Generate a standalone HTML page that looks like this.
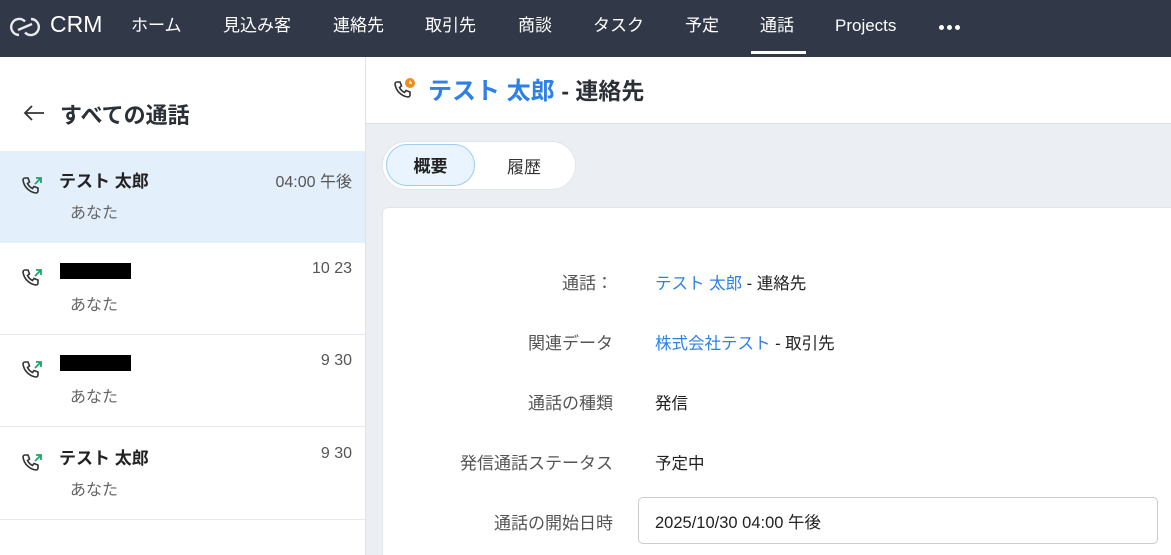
<!DOCTYPE html>
<html><head><meta charset="utf-8"><style>
*{margin:0;padding:0;box-sizing:border-box}
html,body{width:1171px;height:555px;overflow:hidden}
body{background:#fff;font-family:"Liberation Sans","Noto Sans CJK JP",sans-serif;position:relative;color:#222}
.nav{position:absolute;left:0;top:0;width:1171px;height:57px;background:#313847;color:#fff}
.nav span{position:absolute;top:15px;font-size:17px;line-height:22px}
.left{position:absolute;left:0;top:57px;width:366px;height:498px;border-right:1px solid #dde3ea;background:#fff}
.item{position:absolute;left:0;width:365px;height:92px;border-bottom:1px solid #e6e9ee}
.item .nm{position:absolute;left:59px;top:16px;font-size:17px;font-weight:bold;color:#222}
.item .you{position:absolute;left:70px;top:48px;font-size:16px;color:#666}
.item .tm{position:absolute;right:13px;top:17px;font-size:16px;color:#555}
.item svg{position:absolute;left:20px;top:24px}
.red{position:absolute;left:60px;top:20px;width:71px;height:16px;background:#000}
.right{position:absolute;left:366px;top:57px;width:805px;height:498px;background:#ebeef3;overflow:hidden}
.hdr{position:absolute;left:0;top:0;width:805px;height:67px;background:#fff;border-bottom:1px solid #d8dee7}
.lab{position:absolute;right:558px;font-size:17px;color:#555;text-align:right;white-space:nowrap}
.val{position:absolute;left:655px;font-size:16.5px;color:#222;white-space:nowrap}
.blue{color:#2f80e4}
</style></head><body>
<div class="nav">
<svg style="position:absolute;left:9px;top:15px" width="32" height="24" viewBox="0 0 32 24"><path d="M10 20a8 8 0 1 1 6-13.5" fill="none" stroke="#e8eaee" stroke-width="2.4"/><path d="M22 4a8 8 0 1 1-6 13.5" fill="none" stroke="#e8eaee" stroke-width="2.4"/><path d="M9 15l14-6" stroke="#e8eaee" stroke-width="2.4"/></svg>
<span style="left:50px;top:13px;font-size:23px">CRM</span>
<span style="left:131px">ホーム</span>
<span style="left:223px">見込み客</span>
<span style="left:333px">連絡先</span>
<span style="left:425px">取引先</span>
<span style="left:518px">商談</span>
<span style="left:593px">タスク</span>
<span style="left:685px">予定</span>
<span style="left:760px">通話</span>
<span style="left:835px">Projects</span>
<div style="position:absolute;left:939px;top:25px;width:5px;height:5px;border-radius:50%;background:#fff;box-shadow:8px 0 #fff,16px 0 #fff"></div>
<div style="position:absolute;left:751px;top:51px;width:55px;height:3px;background:#fff"></div>
</div>
<div class="left">
<svg style="position:absolute;left:23px;top:47px" width="22" height="18" viewBox="0 0 22 18"><path d="M21 9H2M9 2L2 9l7 7" fill="none" stroke="#333" stroke-width="1.8"/></svg>
<div style="position:absolute;left:60px;top:41px;font-size:22px;font-weight:bold;color:#2b2f36">すべての通話</div>
<div class="item" style="top:94px;background:#e3effb;border-bottom:none">
<svg width="24" height="24" viewBox="0 0 24 24"><path d="M5 3l3 0 1.5 4-2 1.5a11 11 0 0 0 5 5l1.5-2 4 1.5 0 3a2 2 0 0 1-2 2A15 15 0 0 1 3 5a2 2 0 0 1 2-2z" fill="none" stroke="#333" stroke-width="1.6"/><path d="M15 9l6-6M16 3h5v5" fill="none" stroke="#1ea36b" stroke-width="1.8"/></svg>
<div class="nm">テスト 太郎</div><div class="tm">04:00 午後</div><div class="you">あなた</div></div>
<div class="item" style="top:186px">
<svg width="24" height="24" viewBox="0 0 24 24"><path d="M5 3l3 0 1.5 4-2 1.5a11 11 0 0 0 5 5l1.5-2 4 1.5 0 3a2 2 0 0 1-2 2A15 15 0 0 1 3 5a2 2 0 0 1 2-2z" fill="none" stroke="#333" stroke-width="1.6"/><path d="M15 9l6-6M16 3h5v5" fill="none" stroke="#1ea36b" stroke-width="1.8"/></svg>
<div class="red"></div><div class="tm">10 23</div><div class="you">あなた</div></div>
<div class="item" style="top:278px">
<svg width="24" height="24" viewBox="0 0 24 24"><path d="M5 3l3 0 1.5 4-2 1.5a11 11 0 0 0 5 5l1.5-2 4 1.5 0 3a2 2 0 0 1-2 2A15 15 0 0 1 3 5a2 2 0 0 1 2-2z" fill="none" stroke="#333" stroke-width="1.6"/><path d="M15 9l6-6M16 3h5v5" fill="none" stroke="#1ea36b" stroke-width="1.8"/></svg>
<div class="red"></div><div class="tm">9 30</div><div class="you">あなた</div></div>
<div class="item" style="top:371px">
<svg width="24" height="24" viewBox="0 0 24 24"><path d="M5 3l3 0 1.5 4-2 1.5a11 11 0 0 0 5 5l1.5-2 4 1.5 0 3a2 2 0 0 1-2 2A15 15 0 0 1 3 5a2 2 0 0 1 2-2z" fill="none" stroke="#333" stroke-width="1.6"/><path d="M15 9l6-6M16 3h5v5" fill="none" stroke="#1ea36b" stroke-width="1.8"/></svg>
<div class="nm">テスト 太郎</div><div class="tm">9 30</div><div class="you">あなた</div></div>
</div>
<div class="right">
<div class="hdr">
<svg style="position:absolute;left:26px;top:20px" width="24" height="24" viewBox="0 0 24 24"><path d="M5 5l3 0 1.5 4-2 1.5a11 11 0 0 0 5 5l1.5-2 4 1.5 0 3a2 2 0 0 1-2 2A15 15 0 0 1 3 7a2 2 0 0 1 2-2z" fill="none" stroke="#333" stroke-width="1.6"/><circle cx="18" cy="6" r="5" fill="#f08c1a"/><path d="M18 3.5V6h2" fill="none" stroke="#fff" stroke-width="1.2"/></svg>
<div style="position:absolute;left:62px;top:14px;font-size:24px;font-weight:bold;color:#2f80e4">テスト 太郎 <span style="color:#2b2f36;font-size:23px">- 連絡先</span></div>
</div>
<div style="position:absolute;left:16px;top:84px;width:194px;height:49px;background:#fff;border-radius:25px;border:1px solid #e2e6ec"></div>
<div style="position:absolute;left:20px;top:87px;width:89px;height:42px;background:#eaf4fe;border:1px solid #9ccdf4;border-radius:21px;text-align:center;line-height:44px;font-size:17px;font-weight:bold">概要</div>
<div style="position:absolute;left:141px;top:96px;font-size:17px;color:#333">履歴</div>
<div style="position:absolute;left:16px;top:150px;width:789px;height:348px;background:#fff;border-top:1px solid #e2e6ec;border-left:1px solid #e2e6ec;border-radius:6px 0 0 0"></div>
</div>
<div class="lab" style="top:269px">通話：</div>
<div class="val" style="top:270px"><span class="blue">テスト 太郎</span> - 連絡先</div>
<div class="lab" style="top:329px">関連データ</div>
<div class="val" style="top:330px"><span class="blue">株式会社テスト</span> - 取引先</div>
<div class="lab" style="top:389px">通話の種類</div>
<div class="val" style="top:390px">発信</div>
<div class="lab" style="top:449px">発信通話ステータス</div>
<div class="val" style="top:450px">予定中</div>
<div class="lab" style="top:509px">通話の開始日時</div>
<div style="position:absolute;left:638px;top:497px;width:520px;height:47px;border:1px solid #c8ccd2;border-radius:5px;background:#fff"></div>
<div class="val" style="top:509px">2025/10/30 04:00 午後</div>
</body></html>
